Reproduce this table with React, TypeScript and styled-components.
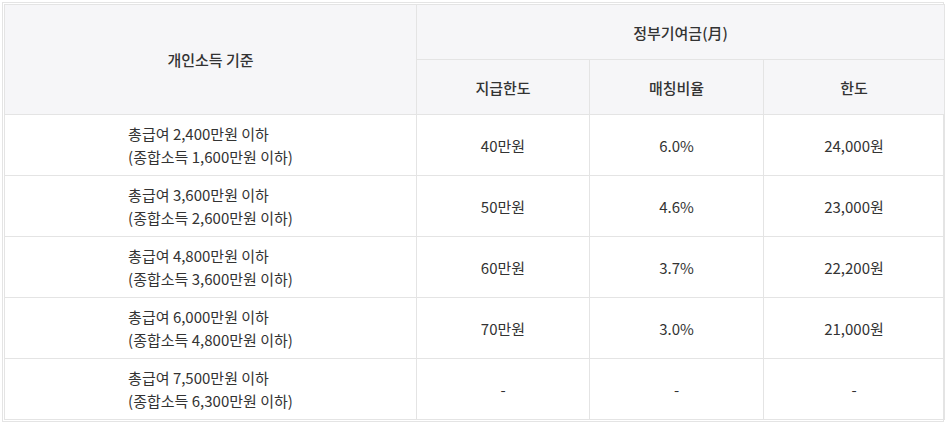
import React from "react";
import styled, { createGlobalStyle } from "styled-components";

const Global = createGlobalStyle`
  html, body { margin: 0; padding: 0; background: #ffffff; }
  body { font-family: "Noto Sans CJK KR", "Noto Sans", sans-serif; color: #333; }
`;

const Frame = styled.div`
  margin: 2px 0 0 2px;
  width: 942px;
  border: 1px solid #e4e4e4;
  padding: 1px;
  box-sizing: border-box;
  background: #fff;
`;

const Table = styled.table`
  width: 940px;
  border-collapse: collapse;
  table-layout: fixed;
  border: 1px solid #e4e4e4;
  font-size: 15px;
  letter-spacing: 0;
`;

const Th = styled.th`
  background: #f6f6f8;
  border: 1px solid #e4e4e4;
  font-weight: 500;
  color: #333;
  height: 54px;
  padding: 0;
  text-align: center;
  vertical-align: middle;
`;

const Td = styled.td`
  border: 1px solid #e4e4e4;
  height: 60px;
  padding: 0;
  text-align: center;
  vertical-align: middle;
  line-height: 23px;
  color: #333;
`;

const Criteria = styled.div`
  display: inline-block;
  text-align: left;
`;

const Line = styled.span`
  display: block;
`;

type Row = { gross: string; total: string; limit: string; ratio: string; max: string };

const rows: Row[] = [
  { gross: "2,400", total: "1,600", limit: "40만원", ratio: "6.0%", max: "24,000원" },
  { gross: "3,600", total: "2,600", limit: "50만원", ratio: "4.6%", max: "23,000원" },
  { gross: "4,800", total: "3,600", limit: "60만원", ratio: "3.7%", max: "22,200원" },
  { gross: "6,000", total: "4,800", limit: "70만원", ratio: "3.0%", max: "21,000원" },
  { gross: "7,500", total: "6,300", limit: "-", ratio: "-", max: "-" },
];

export default function App() {
  return (
    <>
      <Global />
      <Frame>
        <Table>
          <colgroup>
            <col style={{ width: 412 }} />
            <col style={{ width: 173 }} />
            <col style={{ width: 174 }} />
            <col style={{ width: 181 }} />
          </colgroup>
          <thead>
            <tr>
              <Th rowSpan={2}>개인소득 기준</Th>
              <Th colSpan={3}>정부기여금(月)</Th>
            </tr>
            <tr>
              <Th>지급한도</Th>
              <Th>매칭비율</Th>
              <Th>한도</Th>
            </tr>
          </thead>
          <tbody>
            {rows.map((r) => (
              <tr key={r.gross}>
                <Td>
                  <Criteria>
                    <Line>총급여 {r.gross}만원 이하</Line>
                    <Line>(종합소득 {r.total}만원 이하)</Line>
                  </Criteria>
                </Td>
                <Td>{r.limit}</Td>
                <Td>{r.ratio}</Td>
                <Td>{r.max}</Td>
              </tr>
            ))}
          </tbody>
        </Table>
      </Frame>
    </>
  );
}
